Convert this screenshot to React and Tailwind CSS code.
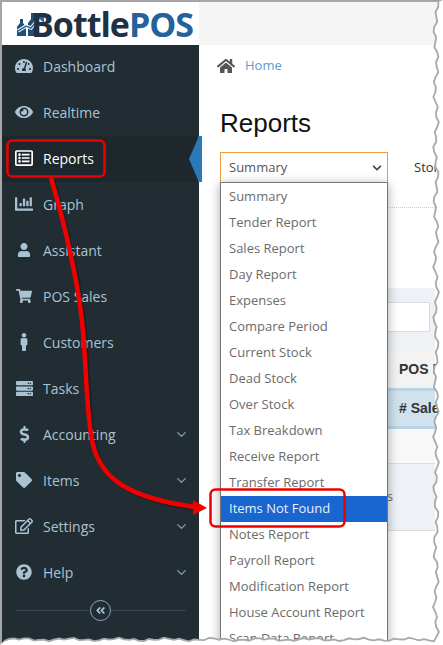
import {
  FaTachometerAlt,
  FaEye,
  FaRegListAlt,
  FaChartBar,
  FaUser,
  FaShoppingCart,
  FaMale,
  FaServer,
  FaDollarSign,
  FaTag,
  FaRegEdit,
  FaQuestionCircle,
  FaHome,
  FaAngleDoubleLeft,
  FaChevronDown,
} from "react-icons/fa";
import { ChevronDown } from "lucide-react";

const menu = [
  { label: "Dashboard", icon: FaTachometerAlt, size: 18 },
  { label: "Realtime", icon: FaEye, size: 18 },
  { label: "Reports", icon: FaRegListAlt, size: 18, active: true },
  { label: "Graph", icon: FaChartBar, size: 18 },
  { label: "Assistant", icon: FaUser, size: 14 },
  { label: "POS Sales", icon: FaShoppingCart, size: 16 },
  { label: "Customers", icon: FaMale, size: 18 },
  { label: "Tasks", icon: FaServer, size: 17 },
  { label: "Accounting", icon: FaDollarSign, size: 17, more: true },
  { label: "Items", icon: FaTag, size: 16, more: true },
  { label: "Settings", icon: FaRegEdit, size: 18, more: true },
  { label: "Help", icon: FaQuestionCircle, size: 16, more: true },
];

const reports = [
  "Summary",
  "Tender Report",
  "Sales Report",
  "Day Report",
  "Expenses",
  "Compare Period",
  "Current Stock",
  "Dead Stock",
  "Over Stock",
  "Tax Breakdown",
  "Receive Report",
  "Transfer Report",
  "Items Not Found",
  "Notes Report",
  "Payroll Report",
  "Modification Report",
  "House Account Report",
  "Scan Data Report",
];

// torn paper edge of the screenshot
function tornEdge() {
  const pts = [];
  for (let y = 2; y <= 636; y += 5) {
    const x = 436 + Math.sin(y * 0.37) * 1.6 + Math.sin(y * 0.11 + 1) * 1.4;
    pts.push(`${x.toFixed(1)},${y}`);
  }
  for (let x = 434; x >= 0; x -= 5) {
    const y = 639.5 + Math.sin(x * 0.41) * 1 + Math.sin(x * 0.13 + 2) * 0.9;
    pts.push(`${x},${y.toFixed(1)}`);
  }
  return pts.join(" ");
}

function Logo() {
  return (
    <div className="flex h-full items-center pl-[13px]">
      <svg width="30" height="28" viewBox="0 0 30 28" className="-mr-[14px] shrink-0">
        <path d="M2 26V17l3-4V9h3v4l3 4v9zM13 26V13l3-4V3h4v6l3 4v13z" fill="#1f4e79" />
        <path d="M3 21l8-5 5 2 9-11" stroke="#fff" strokeWidth="3.5" fill="none" />
        <path d="M3 21l8-5 5 2 9-11" stroke="#2c6aa3" strokeWidth="1.5" fill="none" />
        <path d="M19 4h10v9z" fill="#2c6aa3" />
      </svg>
      <span className="font-['Open_Sans',sans-serif] text-[34px] font-bold leading-none tracking-[-1px] text-[#1d3044]">
        Bottle<span className="text-[#25619b]">POS</span>
      </span>
    </div>
  );
}

function Sidebar() {
  return (
    <aside className="w-[197px] shrink-0 bg-[#212d33] font-['Open_Sans',sans-serif] text-[14px]">
      <nav className="-mt-px">
        {menu.map((item) => {
          const Icon = item.icon;
          return (
            <div
              key={item.label}
              className={
                item.active
                  ? "relative flex h-[46px] items-center bg-[#1e272c] pb-[2px] text-white"
                  : "relative flex h-[46px] items-center pb-[2px] text-[#a9c3d3]"
              }
            >
              <span className="flex w-[41px] justify-center pl-[3px]">
                <Icon size={item.size} />
              </span>
              <span>{item.label}</span>
              {item.more && (
                <ChevronDown size={15} className="absolute left-[172px] text-[#7fa3b8]" />
              )}
              {item.active && (
                <svg width="13" height="46" viewBox="0 0 13 46" className="absolute left-[187px] top-0">
                  <path d="M13 0v46H9V44L0 23 9 2V0z" fill="#2a7ab9" />
                </svg>
              )}
            </div>
          );
        })}
      </nav>
      <div className="relative mx-[13px] mt-[14px] h-px bg-[#38454d]">
        <span className="absolute left-[75px] -top-[10px] flex h-[21px] w-[21px] items-center justify-center rounded-full border border-[#8fa9b8] bg-[#212d33] text-[#a9c3d3]">
          <FaAngleDoubleLeft size={11} />
        </span>
      </div>
    </aside>
  );
}

function ReportSelect() {
  return (
    <div className="relative w-[168px] shrink-0 font-['Open_Sans',sans-serif] text-[13px]">
      <div className="flex h-[31px] items-center justify-between border border-[#f09a3e] pl-[8px] pr-[5px] text-[#555]">
        <span>Summary</span>
        <FaChevronDown size={10} className="text-[#444]" />
      </div>
      <ul className="absolute left-0 top-[30px] z-10 h-[480px] w-full border border-[#767676] bg-white pt-[1px] text-[#6b6b6b] shadow-[0_2px_10px_rgba(0,0,0,0.35)]">
        {reports.map((name) => (
          <li
            key={name}
            className={
              name === "Items Not Found"
                ? "flex h-[26px] items-center bg-[#1a66d0] pl-[8px] text-[#e8f0fb]"
                : "flex h-[26px] items-center pl-[8px]"
            }
          >
            {name}
          </li>
        ))}
      </ul>
    </div>
  );
}

function Main() {
  return (
    <main className="min-w-0 flex-1 overflow-hidden">
      <div className="flex h-[40px] items-center gap-[10px] pl-[18px] pt-[2px] font-['Open_Sans',sans-serif] text-[13px] text-[#5c9bd1]">
        <FaHome size={18} className="text-[#555]" />
        <span>Home</span>
      </div>
      <h1 className="mt-[21px] pl-[21px] font-['Liberation_Sans',Arial,sans-serif] text-[26px] leading-[34px] text-[#111]">
        Reports
      </h1>
      <div className="mt-[12px] flex items-center pl-[21px]">
        <ReportSelect />
        <span className="ml-[26px] font-['Open_Sans',sans-serif] text-[13px] whitespace-nowrap text-[#333]">Store</span>
      </div>
      <div className="ml-[189px] mt-[24px] border-t border-dotted border-[#ccc]" />

      <div className="ml-[21px] mt-[80px] w-[215px] bg-[#eef1f5] pb-[18px] pt-[14px]">
        <div className="h-[30px] w-[210px] border border-[#d9dde2] bg-white" />
      </div>
      <div className="ml-[21px] flex h-[38px] w-[215px] items-center bg-[#f3f3f3] pl-[179px] font-['Liberation_Sans',Arial,sans-serif] text-[14px] font-bold whitespace-nowrap text-[#333]">
        POS Item
      </div>
      <div className="ml-[21px] flex h-[41px] w-[215px] items-center border-y-[3px] border-[#b9d4e5] bg-[#cfe2ee] pl-[179px] font-['Liberation_Sans',Arial,sans-serif] text-[14px] font-bold whitespace-nowrap text-[#333]">
        # Sales
      </div>
      <div className="ml-[21px] h-[34px] w-[215px] bg-[#f8f8f8]" />
      <div className="ml-[21px] flex h-[68px] w-[215px] items-center justify-start border-y border-[#dddddd] bg-[#eef1f5] pl-[130px] font-['Open_Sans',sans-serif] text-[12px] text-[#666]">
        <span className="w-[43px] text-right">Items</span>
      </div>
    </main>
  );
}

export default function App() {
  return (
    <div className="relative h-[645px] w-[443px] overflow-hidden bg-white">
      <div className="flex h-full flex-col border-l-2 border-t-2 border-[#a6a6a6]">
        <header className="flex h-[43px] shrink-0">
          <div className="w-[197px] shrink-0 bg-white">
            <Logo />
          </div>
          <div className="flex-1 bg-[#f5f5f5]" />
        </header>
        <div className="flex min-h-0 flex-1">
          <Sidebar />
          <Main />
        </div>
      </div>

      {/* red callouts drawn over the screenshot */}
      <svg width="443" height="645" viewBox="0 0 443 645" className="pointer-events-none absolute left-0 top-0 z-20">
        <rect x="7.5" y="140.5" width="97" height="36" rx="5" fill="none" stroke="#ee0000" strokeWidth="2.5" />
        <rect x="210.5" y="489.5" width="134" height="37" rx="5" fill="none" stroke="#ee0000" strokeWidth="2.5" />
        <path
          d="M51 178C61 212 73 258 80 305C87 352 85 412 93 445C102 480 130 498 195 507"
          fill="none"
          stroke="#000"
          strokeOpacity="0.22"
          strokeWidth="4.5"
          transform="translate(2 2)"
        />
        <path
          d="M51 178C61 212 73 258 80 305C87 352 85 412 93 445C102 480 130 498 195 507"
          fill="none"
          stroke="#f00000"
          strokeWidth="4.5"
        />
        <path d="M193 500L207 508L193 515z" fill="#f00000" />
      </svg>

      <svg width="443" height="645" viewBox="0 0 443 645" className="pointer-events-none absolute left-0 top-0 z-30">
        <polygon points={`${tornEdge()} 0,645 443,645 443,0`} fill="#fff" />
        <polyline points={tornEdge()} fill="none" stroke="#a8a8a8" strokeWidth="1.8" />
      </svg>
    </div>
  );
}
